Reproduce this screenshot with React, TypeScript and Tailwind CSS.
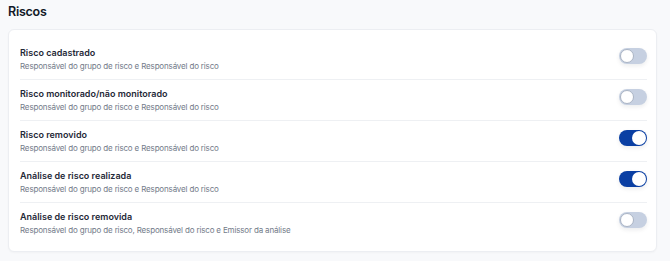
import { useState } from "react"

interface RuleItem {
  title: string
  subtitle: string
  enabled: boolean
}

const initialRules: RuleItem[] = [
  { title: "Risco cadastrado", subtitle: "Responsável do grupo de risco e Responsável do risco", enabled: false },
  { title: "Risco monitorado/não monitorado", subtitle: "Responsável do grupo de risco e Responsável do risco", enabled: false },
  { title: "Risco removido", subtitle: "Responsável do grupo de risco e Responsável do risco", enabled: true },
  { title: "Análise de risco realizada", subtitle: "Responsável do grupo de risco e Responsável do risco", enabled: true },
  { title: "Análise de risco removida", subtitle: "Responsável do grupo de risco, Responsável do risco e Emissor da análise", enabled: false },
]

const Toggle = (props: { on: boolean, onClick: () => void }) => {
  const { on, onClick } = props
  return (
    <button
      onClick={onClick}
      className={`mt-[2px] flex h-[16px] w-[28px] shrink-0 items-center rounded-full p-[1px] shadow-[0_2px_4px_rgba(15,23,42,0.08)] ${on ? "justify-end bg-[#0a3fa3]" : "justify-start bg-[#c6d0e1]"}`}
    >
      <span className={`block h-[14px] w-[14px] rounded-full bg-white ${on ? "" : "border border-[#aab4c4]"}`} />
    </button>
  )
}

const App = () => {
  const [rules, setRules] = useState(initialRules)

  const toggle = (index: number) => {
    setRules(rules.map((rule, i) => (i === index ? { ...rule, enabled: !rule.enabled } : rule)))
  }

  return (
    <div className="h-[261px] w-[670px] bg-[#f8f9fb] px-[8px] pt-[2px] font-['Inter',sans-serif]">
      <h2 className="text-[12.5px] font-semibold leading-[20px] tracking-[-0.02em] text-[#111827]"> Riscos </h2>

      <div className="mt-[7px] w-[649px] rounded-[6px] border border-[#eceef2] bg-white pt-[9px] pr-[9px] pb-[8px] pl-[11px] shadow-[0_1px_2px_rgba(15,23,42,0.03)]">
        {rules.map((rule, index) => (
          <div
            className={`flex items-start justify-between py-[7px] ${index < rules.length - 1 ? "border-b border-[#eef0f3]" : ""}`}
            key={rule.title}
          >
            <div className="flex flex-col">
              <span className="text-[9px] font-semibold leading-[14px] text-[#1f2937]"> {rule.title} </span>
              <span className="text-[8px] leading-[12px] tracking-[-0.02em] text-[#737b89]"> {rule.subtitle} </span>
            </div>
            <Toggle on={rule.enabled} onClick={() => toggle(index)} />
          </div>
        ))}
      </div>
    </div>
  )
}

export default App
